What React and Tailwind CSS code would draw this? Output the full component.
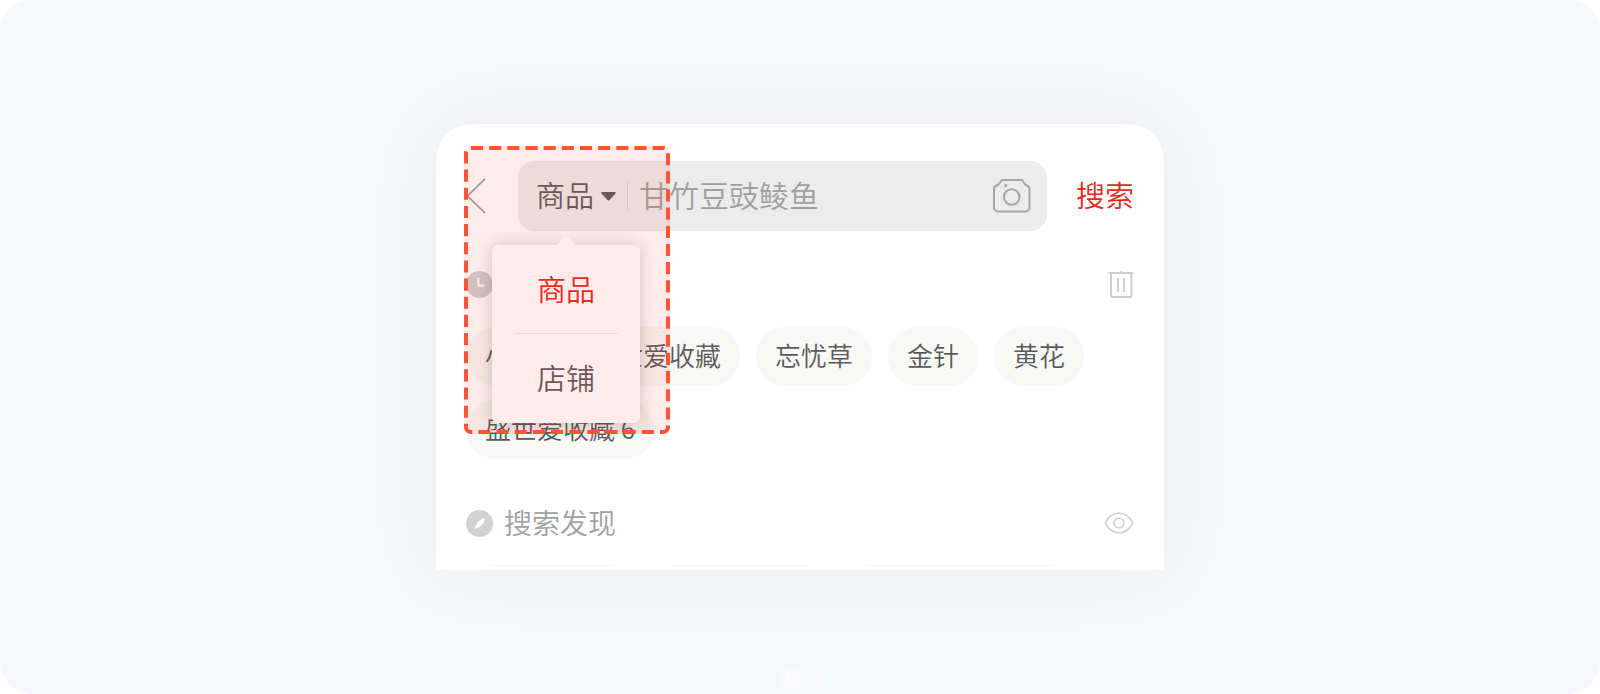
const HISTORY = ['小米', '盛世爱收藏', '忘忧草', '金针', '黄花', '盛世爱收藏 6'];

function BackIcon() {
  return (
    <svg width="20" height="36" viewBox="0 0 20 36" fill="none" stroke="#9c9c9c" strokeWidth="1.7" aria-hidden="true">
      <path d="M19 .8 1.5 18 19 35" />
    </svg>
  );
}

function CameraIcon() {
  return (
    <svg width="38" height="34" viewBox="0 0 38 34" fill="none" stroke="#a6a6a6" strokeWidth="2" strokeLinejoin="round" aria-hidden="true">
      <path d="M10.500 1h17.500c1.200 0 1.700.6 2.200 1.600.9 1.900 1.900 3.200 3.700 3.900 1.900.7 2.600 1.400 2.600 3.200V28.500a4 4 0 0 1-4 4H5a4 4 0 0 1-4-4V9.700c0-1.800.7-2.500 2.600-3.200 1.800-.7 3.200-2 4.100-3.900.5-1 1.200-1.600 2.800-1.600Z" />
      <circle cx="18.700" cy="18" r="7.800" />
      <circle cx="12.700" cy="6.700" r="1.600" fill="#a6a6a6" stroke="none" />
    </svg>
  );
}

function TrashIcon() {
  return (
    <svg width="26" height="28" viewBox="0 0 26 28" fill="none" stroke="#cdcdcd" strokeWidth="2" aria-hidden="true">
      <path d="M.5 3h25M3 3v22a2 2 0 0 0 2 2h16.500a2 2 0 0 0 2-2V3M10 8v14M16 8v14" />
      <path d="M11.300 2.500a1.800 1.800 0 0 1 3.400 0Z" fill="#cdcdcd" stroke="none" />
    </svg>
  );
}

function EyeIcon() {
  return (
    <svg width="30" height="22" viewBox="0 0 30 22" fill="none" stroke="#d3d3d3" strokeWidth="1.800" aria-hidden="true">
      <path d="M1.200 11C4.500 4.600 9.300 1.200 15 1.200S25.500 4.600 28.800 11C25.500 17.400 20.700 20.800 15 20.800S4.500 17.400 1.200 11Z" strokeLinejoin="round" />
      <circle cx="15" cy="11" r="4.900" />
    </svg>
  );
}

function ClockIcon() {
  return (
    <svg width="27" height="27" viewBox="0 0 27 27" fill="none" aria-hidden="true">
      <circle cx="13.500" cy="13.500" r="13.500" fill="#cfcfcf" />
      <path d="M12.500 7v7.500h6" stroke="#fff" strokeWidth="2" />
    </svg>
  );
}

function CompassIcon() {
  return (
    <svg width="27" height="27" viewBox="0 0 27 27" fill="none" aria-hidden="true">
      <circle cx="13.500" cy="13.500" r="13.500" fill="#d2d2d2" />
      <path d="M18.900 8.300c-.3 2.900-1.500 5.300-3.400 7-1.700 1.600-3.800 2.700-6.800 3.600.6-2.700 1.800-5.100 3.500-6.900 1.900-2 3.900-3.200 6.700-3.700Z" fill="#fff" />
    </svg>
  );
}

function TypeMenu() {
  return (
    <div role="menu" className="absolute top-[84px] -left-[26px] z-10 w-[148px] rounded-md bg-white px-[22px] shadow-[0_0_16px_rgba(0,0,0,0.2)]">
      <svg className="absolute -top-[9px] left-[63px]" width="22" height="10" viewBox="0 0 22 10" aria-hidden="true">
        <path d="M0 10 9 1.300Q11-.5 13 1.300L22 10Z" fill="#fff" />
      </svg>
      <button role="menuitem" className="block h-[89px] w-full border-b border-[#ececec] pb-px text-center text-[29px] text-[#e42a20]">商品</button>
      <button role="menuitem" className="block h-[89px] w-full pb-px text-center text-[29px] text-[#5c5c5c]">店铺</button>
    </div>
  );
}

function Highlight() {
  return (
    <div className="pointer-events-none absolute top-[22px] left-7 z-20 h-[288px] w-[206px] rounded-lg bg-[#ff412f]/10">
      <svg width="206" height="288" viewBox="0 0 206 288" fill="none" aria-hidden="true">
        <rect x="2" y="2" width="202" height="284" rx="5" stroke="#ff5336" strokeWidth="4" strokeDasharray="12 6" pathLength="954" />
      </svg>
    </div>
  );
}

export default function App() {
  return (
    <main className="relative flex justify-center rounded-[32px] bg-[#f7f8fc] py-[124px] font-['Noto_Sans_CJK_SC',sans-serif] font-[350]">
      <section className="relative w-full max-w-[728px] rounded-t-[36px] bg-white px-[30px] pt-[37px] pb-1 shadow-[0_0_80px_rgba(20,20,30,0.055)]">
        <form className="flex items-center" onSubmit={(e) => e.preventDefault()}>
          <button type="button" aria-label="返回" className="w-[52px] shrink-0">
            <BackIcon />
          </button>
          <div className="relative flex h-[70px] min-w-0 flex-1 items-center rounded-2xl bg-[#ececec] pr-4 pl-[18px]">
            <button type="button" aria-haspopup="menu" aria-expanded="true" className="flex shrink-0 items-center gap-[7px] text-[29px] text-[#5c5c5c]">
              <span className="pb-1 leading-[44px]">商品</span>
              <svg width="15" height="9" viewBox="0 0 15 9" fill="#5c5c5c" aria-hidden="true">
                <path d="M1.400 0h12.200c1 0 1.500 1 .8 1.700L8.500 8a1.400 1.400 0 0 1-2 0L.6 1.700C-.1 1 .4 0 1.400 0Z" />
              </svg>
            </button>
            <span className="mx-[11px] h-[30px] w-px shrink-0 bg-[#d6d6d6]" />
            <input type="text" aria-label="搜索商品" placeholder="甘竹豆豉鲮鱼" className="h-[48px] min-w-0 flex-1 bg-transparent pb-1 text-[30px] leading-[44px] outline-none placeholder:text-[#a0a0a0]" />
            <button type="button" aria-label="拍照搜索" className="shrink-0">
              <CameraIcon />
            </button>
            <TypeMenu />
          </div>
          <button type="submit" className="ml-[29px] shrink-0 pb-1 text-[29px] leading-[44px] text-[#e42a20]">搜索</button>
        </form>

        <div className="mt-8 flex h-[42px] items-center justify-between">
          <h2 aria-label="历史搜索">
            <ClockIcon />
          </h2>
          <button type="button" aria-label="清空历史">
            <TrashIcon />
          </button>
        </div>
        <ul className="mt-[22px] flex flex-wrap gap-x-4 gap-y-[14px]">
          {HISTORY.map((word) => (
            <li key={word}>
              <button type="button" className="block h-[59px] rounded-full bg-[#f8f8f7] px-[19px] pb-[3px] text-[26px] leading-[56px] whitespace-nowrap text-[#5a5a5a]">{word}</button>
            </li>
          ))}
        </ul>

        <div className="mt-[43px] flex h-[42px] items-center justify-between">
          <h2 className="flex items-center gap-[11px] text-[28px] text-[#a0a0a0]">
            <CompassIcon />
            <span className="pb-[3px] leading-[42px]">搜索发现</span>
          </h2>
          <button type="button" aria-label="隐藏搜索发现">
            <EyeIcon />
          </button>
        </div>
        <div className="mt-[21px] flex gap-[58px] pl-6">
          <span className="h-px w-[124px] bg-[#f6f6f6]" />
          <span className="h-px w-[136px] bg-[#f6f6f6]" />
          <span className="h-px w-[186px] bg-[#f6f6f6]" />
        </div>
        <Highlight />
      </section>

      <div className="absolute bottom-[6px] left-1/2 flex -translate-x-5 items-center gap-1 text-sm text-[#fafbfe]">
        <span className="flex size-5 items-center justify-center rounded-full bg-[#fafbfe] text-xs font-bold text-[#f7f8fc]">UI</span>
        .cn
      </div>
    </main>
  );
}
